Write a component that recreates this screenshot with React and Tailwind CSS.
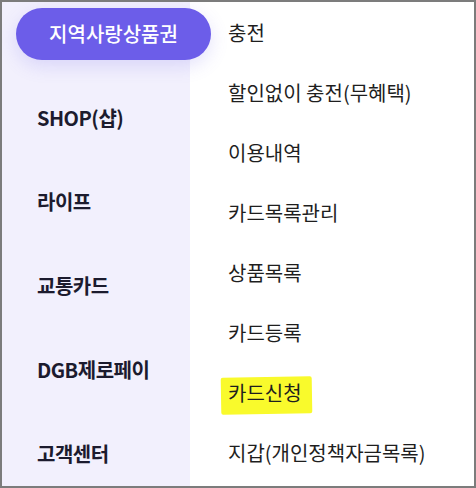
import React from 'react'

const leftItems = ['SHOP(샵)', '라이프', '교통카드', 'DGB제로페이', '고객센터']

const rightItems = [
  '충전',
  '할인없이 충전(무혜택)',
  '이용내역',
  '카드목록관리',
  '상품목록',
  '카드등록',
  '카드신청',
  '지갑(개인정책자금목록)',
]

const font = { fontFamily: '"Noto Sans CJK KR", "Noto Sans", sans-serif' }

export default function App() {
  return (
    <div className="w-[476px] h-[488px] border-2 border-[#7c7c7c] bg-white overflow-hidden" style={font}>
      <div className="flex h-full">
        {/* left category column */}
        <div className="w-[188px] shrink-0 h-full bg-[#f2f0fd] flex flex-col">
          <div className="mt-[6px] ml-[14px] w-[195px] h-[52px] shrink-0 rounded-full bg-[#6c5de9] flex items-center justify-center text-white text-[20px] font-medium relative z-10 shadow-[0_6px_18px_rgba(108,93,233,0.18)]">
            지역사랑상품권
          </div>
          <div className="mt-[16px] flex flex-col">
            {leftItems.map((item) => (
              <div key={item} className="h-[84px] shrink-0 flex items-center pl-[35px] text-[20px] font-semibold text-[#1c1b2e] tracking-[-0.5px]">
                {item}
              </div>
            ))}
          </div>
        </div>

        {/* right sub menu */}
        <div className="flex-1 h-full flex flex-col pt-[1px]">
          {rightItems.map((item) => (
            <div key={item} className="h-[60px] shrink-0 flex items-center pl-[38px] text-[20px] text-[#1e1e1e]">
              {item === '카드신청' ? (
                <span className="relative inline-block">
                  <span className="absolute -left-[7px] -right-[10px] -top-[1px] -bottom-[6px] bg-[#f9fa2c] -rotate-1 rounded-[2px]" />
                  <span className="relative">{item}</span>
                </span>
              ) : (
                item
              )}
            </div>
          ))}
        </div>
      </div>
    </div>
  )
}
